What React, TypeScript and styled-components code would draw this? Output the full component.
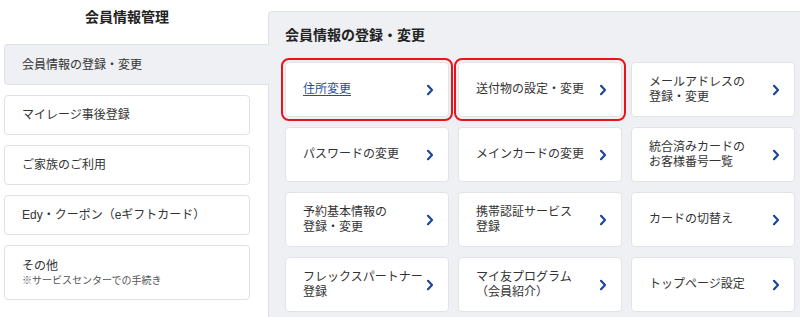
import React from "react";
import styled, { createGlobalStyle } from "styled-components";

const GlobalStyle = createGlobalStyle`
  html, body { margin: 0; padding: 0; background: #ffffff; }
  body {
    font-family: "Liberation Sans", "Noto Sans CJK JP", sans-serif;
    color: #333333;
    -webkit-font-smoothing: antialiased;
  }
`;

const Page = styled.div`
  display: flex;
  align-items: flex-start;
  width: 800px;
  height: 317px;
  overflow: hidden;
`;

const Sidebar = styled.nav`
  width: 268px;
  flex: none;
  padding-left: 4px;
  box-sizing: border-box;
`;

const SideTitle = styled.h2`
  margin: 0;
  width: 246px;
  height: 44px;
  padding-top: 7px;
  box-sizing: border-box;
  text-align: center;
  font-size: 14px;
  line-height: 20px;
  font-weight: 700;
  color: #222;
`;

const SideList = styled.ul`
  list-style: none;
  margin: 0;
  padding: 0;
  display: flex;
  flex-direction: column;
  gap: 10px;
`;

const SideItem = styled.li<{ $active?: boolean; $tall?: boolean }>`
  box-sizing: border-box;
  width: ${(p) => (p.$active ? "265px" : "246px")};
  height: ${(p) => (p.$tall ? "55px" : p.$active ? "41px" : "40px")};
  display: flex;
  flex-direction: column;
  justify-content: center;
  padding-left: 17px;
  font-size: 12px;
  line-height: 16px;
  color: #333;
  background: ${(p) => (p.$active ? "#eef0f3" : "#ffffff")};
  border: 1px solid #dfe1e5;
  border-right: ${(p) => (p.$active ? "none" : "1px solid #dfe1e5")};
  border-radius: ${(p) => (p.$active ? "4px 0 0 4px" : "4px")};
  position: relative;
  z-index: ${(p) => (p.$active ? 1 : 0)};
`;

const SubNote = styled.span`
  font-size: 10px;
  line-height: 13px;
  color: #555;
`;

const Panel = styled.section`
  flex: 1;
  margin-top: 11px;
  height: 330px;
  box-sizing: border-box;
  background: #eef0f3;
  border-top: 1px solid #dfe1e5;
  border-left: 1px solid #dfe1e5;
  border-top-left-radius: 4px;
  padding: 13px 0 0 16px;
`;

const PanelTitle = styled.h3`
  margin: 0 0 17px;
  font-size: 14px;
  line-height: 20px;
  font-weight: 700;
  color: #222;
`;

const Grid = styled.div`
  display: grid;
  grid-template-columns: repeat(3, 164px);
  grid-auto-rows: 55px;
  column-gap: 9px;
  row-gap: 10px;
`;

const Card = styled.a<{ $selected?: boolean }>`
  box-sizing: border-box;
  display: flex;
  align-items: center;
  justify-content: space-between;
  padding: 0 14px 0 17px;
  background: #ffffff;
  border: 1px solid #e1e3e7;
  border-radius: 4px;
  text-decoration: none;
  color: #333;
  font-size: 12px;
  line-height: 15px;
  outline: ${(p) => (p.$selected ? "2px solid #e8141c" : "none")};
  outline-offset: 2px;
`;

const CardLabel = styled.span<{ $link?: boolean }>`
  color: ${(p) => (p.$link ? "#2a4a9a" : "#333")};
  text-decoration: ${(p) => (p.$link ? "underline" : "none")};
  text-underline-offset: 2px;
  white-space: pre-line;
`;

const Chevron = () => (
  <svg width="8" height="12" viewBox="0 0 8 12" fill="none">
    <path d="M2 1.8 L6 6 L2 10.2" stroke="#1d4696" strokeWidth="2.2" strokeLinecap="round" strokeLinejoin="round" />
  </svg>
);

const cards: { label: string; selected?: boolean; link?: boolean }[] = [
  { label: "住所変更", selected: true, link: true },
  { label: "送付物の設定・変更", selected: true },
  { label: "メールアドレスの\n登録・変更" },
  { label: "パスワードの変更" },
  { label: "メインカードの変更" },
  { label: "統合済みカードの\nお客様番号一覧" },
  { label: "予約基本情報の\n登録・変更" },
  { label: "携帯認証サービス\n登録" },
  { label: "カードの切替え" },
  { label: "フレックスパートナー\n登録" },
  { label: "マイ友プログラム\n（会員紹介）" },
  { label: "トップページ設定" },
];

export default function App() {
  return (
    <>
      <GlobalStyle />
      <Page>
        <Sidebar>
          <SideTitle>会員情報管理</SideTitle>
          <SideList>
            <SideItem $active>会員情報の登録・変更</SideItem>
            <SideItem>マイレージ事後登録</SideItem>
            <SideItem>ご家族のご利用</SideItem>
            <SideItem>Edy・クーポン（eギフトカード）</SideItem>
            <SideItem $tall>
              <span>その他</span>
              <SubNote>※サービスセンターでの手続き</SubNote>
            </SideItem>
          </SideList>
        </Sidebar>
        <Panel>
          <PanelTitle>会員情報の登録・変更</PanelTitle>
          <Grid>
            {cards.map((c) => (
              <Card key={c.label} $selected={c.selected}>
                <CardLabel $link={c.link}>{c.label}</CardLabel>
                <Chevron />
              </Card>
            ))}
          </Grid>
        </Panel>
      </Page>
    </>
  );
}
